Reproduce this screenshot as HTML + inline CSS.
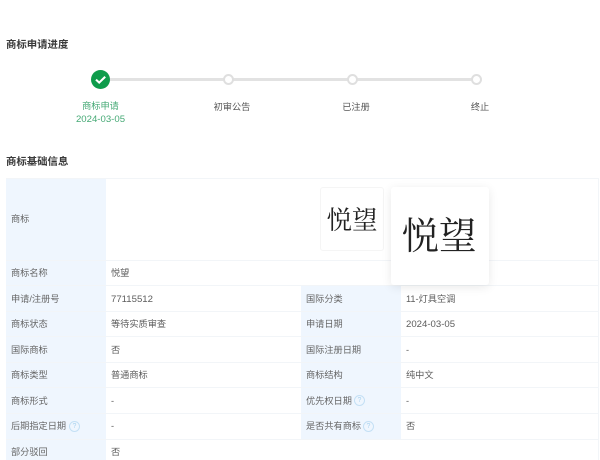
<!DOCTYPE html>
<html lang="zh">
<head>
<meta charset="utf-8">
<style>
html,body{margin:0;padding:0;background:#fff}
body{position:relative;width:600px;height:460px;overflow:hidden;font-family:"Liberation Sans","Noto Sans CJK SC",sans-serif;font-size:9.2px;color:#555}
.t{position:absolute;white-space:nowrap;line-height:12px}
.h{font-size:10.4px;font-weight:700;color:#3a3a3a;left:6px}
.c{text-align:center;width:100px}
.n{font-size:9.6px}
.bar{position:absolute;background:#e2e2e2;height:3px;top:78px}
.dot{position:absolute;top:74px;width:7px;height:7px;border:2px solid #dfdfdf;border-radius:50%;background:#fff}
.b{position:absolute;background:#eff6fe}
.l{position:absolute;background:#f2f5f8;height:1px;left:6px;width:592px}
.k{color:#666}
.v{color:#5c5c5c}
.q{position:absolute;width:9px;height:9px;border:1px solid #c4e0f5;border-radius:50%;color:#a9d2ef;font-size:7px;line-height:9px;text-align:center}
.logo{position:absolute;background:#fff;text-align:center;font-family:"Liberation Serif","Noto Serif CJK SC",serif;color:#222;white-space:nowrap}
</style>
</head>
<body>
<div class="t h" style="top:39.500px">商标申请进度</div>

<div class="bar" style="left:100px;width:376px"></div>
<div style="position:absolute;left:91px;top:70px;width:19px;height:19px;border-radius:50%;background:#0e9c4b"></div>
<svg style="position:absolute;left:91px;top:70px" width="19" height="19" viewBox="0 0 19 19"><path d="M5 9.6 8.2 12.6 14.2 6.8" fill="none" stroke="#fff" stroke-width="2.1"/></svg>
<div class="dot" style="left:223px"></div>
<div class="dot" style="left:347px"></div>
<div class="dot" style="left:471px"></div>

<div class="t c" style="left:50.500px;top:100px;color:#45a975">商标申请</div>
<div class="t c n" style="left:50.500px;top:114px;color:#45a975">2024-03-05</div>
<div class="t c" style="left:182px;top:101px">初审公告</div>
<div class="t c" style="left:306px;top:101px">已注册</div>
<div class="t c" style="left:430px;top:101px">终止</div>

<div class="t h" style="top:156.500px">商标基础信息</div>

<div class="b" style="left:6px;top:178px;width:100px;height:282px"></div>
<div class="b" style="left:301px;top:285px;width:100px;height:154px"></div>

<div class="l" style="top:178px"></div>
<div class="l" style="top:260px"></div>
<div class="l" style="top:285px"></div>
<div class="l" style="top:311px"></div>
<div class="l" style="top:336px"></div>
<div class="l" style="top:362px"></div>
<div class="l" style="top:387px"></div>
<div class="l" style="top:413px"></div>
<div class="l" style="top:439px"></div>
<div style="position:absolute;left:598px;top:178px;width:1px;height:282px;background:#f2f5f8"></div>

<div class="t k" style="left:11px;top:213px">商标</div>
<div class="logo" style="left:320px;top:187px;width:64px;height:64px;border:1px solid #f5f5f5;border-radius:3px;box-sizing:border-box;font-size:25.500px;line-height:64px;padding-top:1px">悦望</div>
<div class="logo" style="left:391px;top:187px;width:98px;height:98px;border-radius:3px;box-shadow:0 2px 10px rgba(0,0,0,.09);font-size:37.500px;line-height:101px;text-indent:-2px">悦望</div>

<div class="t k" style="left:11px;top:267px">商标名称</div><div class="t v" style="left:111px;top:267px">悦望</div>
<div class="t k" style="left:11px;top:292.500px">申请/注册号</div><div class="t v n" style="left:111px;top:294px">77115512</div>
<div class="t k" style="left:11px;top:318px">商标状态</div><div class="t v" style="left:111px;top:318px">等待实质审查</div>
<div class="t k" style="left:11px;top:343.500px">国际商标</div><div class="t v" style="left:111px;top:343.500px">否</div>
<div class="t k" style="left:11px;top:369px">商标类型</div><div class="t v" style="left:111px;top:369px">普通商标</div>
<div class="t k" style="left:11px;top:394.500px">商标形式</div><div class="t v" style="left:111px;top:394.500px">-</div>
<div class="t k" style="left:11px;top:420px">后期指定日期</div><div class="q" style="left:69px;top:421px">?</div><div class="t v" style="left:111px;top:420px">-</div>
<div class="t k" style="left:11px;top:446px">部分驳回</div><div class="t v" style="left:111px;top:446px">否</div>

<div class="t k" style="left:306px;top:292.500px">国际分类</div><div class="t v" style="left:406px;top:292.500px">11-灯具空调</div>
<div class="t k" style="left:306px;top:318px">申请日期</div><div class="t v n" style="left:406px;top:319px">2024-03-05</div>
<div class="t k" style="left:306px;top:343.500px">国际注册日期</div><div class="t v" style="left:406px;top:343.500px">-</div>
<div class="t k" style="left:306px;top:369px">商标结构</div><div class="t v" style="left:406px;top:369px">纯中文</div>
<div class="t k" style="left:306px;top:394.500px">优先权日期</div><div class="q" style="left:354px;top:395px">?</div><div class="t v" style="left:406px;top:394.500px">-</div>
<div class="t k" style="left:306px;top:420px">是否共有商标</div><div class="q" style="left:363px;top:421px">?</div><div class="t v" style="left:406px;top:420px">否</div>
</body>
</html>
